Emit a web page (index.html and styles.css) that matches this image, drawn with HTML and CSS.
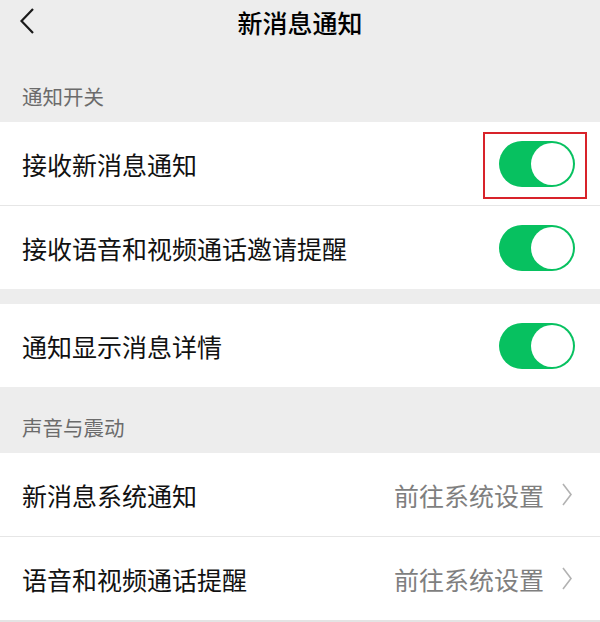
FILE: index.html
```html
<!DOCTYPE html>
<html>
<head>
    <title>新消息通知</title>
    <meta charset="utf-8">
    <meta name="viewport" content="width=device-width, initial-scale=1">
    <link rel="stylesheet" href="styles.css">
</head>
<body>
    <header class="topbar">
        <svg class="back" width="14" height="26" viewBox="0 0 14 26">
            <polyline points="13,1 1.5,13 13,25" fill="none" stroke="#1a1a1a" stroke-width="2.2"/>
        </svg>
        <h1>新消息通知</h1>
    </header>

    <div class="label">通知开关</div>
    <section class="card">
        <div class="row">
            <span>接收新消息通知</span>
            <div class="switch marked"><div class="knob"></div></div>
        </div>
        <div class="row">
            <span>接收语音和视频通话邀请提醒</span>
            <div class="switch"><div class="knob"></div></div>
        </div>
    </section>

    <section class="card gap">
        <div class="row">
            <span>通知显示消息详情</span>
            <div class="switch"><div class="knob"></div></div>
        </div>
    </section>

    <div class="label">声音与震动</div>
    <section class="card">
        <div class="row">
            <span>新消息系统通知</span>
            <div class="more">前往系统设置
                <svg width="10" height="23" viewBox="0 0 10 23">
                    <polyline points="1,1 9,11.5 1,22" fill="none" stroke="#b2b2b2" stroke-width="1.6"/>
                </svg>
            </div>
        </div>
        <div class="row">
            <span>语音和视频通话提醒</span>
            <div class="more">前往系统设置
                <svg width="10" height="23" viewBox="0 0 10 23">
                    <polyline points="1,1 9,11.5 1,22" fill="none" stroke="#b2b2b2" stroke-width="1.6"/>
                </svg>
            </div>
        </div>
    </section>
</body>
</html>
```

FILE: styles.css
```css
:root {
    --bg: #ededed;
    --green: #07c160;
    --line: #e6e6e6;
}

body {
    margin: 0;
    background-color: var(--bg);
    color: #111;
    font-family: "Noto Sans CJK SC", "Noto Sans", sans-serif;
}

.topbar {
    height: 56px;
    display: flex;
    align-items: center;
    justify-content: center;
    position: relative;
}
.topbar h1 {
    margin: 0;
    font-size: 25px;
    font-weight: 500;
    line-height: 1;
    margin-top: -12px;
    color: #000;
}
.back {
    position: absolute;
    left: 20px;
    top: 8px;
}

.label {
    height: 66px;
    box-sizing: border-box;
    padding: 30px 0 0 22px;
    font-size: 20.5px;
    line-height: 21px;
    color: #6b6b6b;
}

.card {
    background-color: #fff;
}
.card.gap {
    margin-top: 15px;
}

.row {
    height: 83px;
    display: flex;
    align-items: center;
    justify-content: space-between;
    padding: 0 25px 0 22px;
    font-size: 25px;
    position: relative;
}
.row + .row {
    border-top: 1px solid var(--line);
}
.card:last-child {
    border-bottom: 2px solid #e4e4e4;
}

.switch {
    width: 76px;
    height: 46px;
    border-radius: 23px;
    background-color: var(--green);
    position: relative;
    box-sizing: border-box;
}
.knob {
    position: absolute;
    right: 2px;
    top: 2px;
    width: 42px;
    height: 42px;
    border-radius: 50%;
    background-color: #fff;
}
.switch.marked::after {
    content: "";
    position: absolute;
    left: -16px;
    top: -9px;
    width: 104px;
    height: 67px;
    box-sizing: border-box;
    border: 2px solid #d8232a;
}

.more {
    display: flex;
    align-items: center;
    gap: 18px;
    color: #7f7f7f;
    margin-right: 3px;
    margin-left: -2px;
}
```
